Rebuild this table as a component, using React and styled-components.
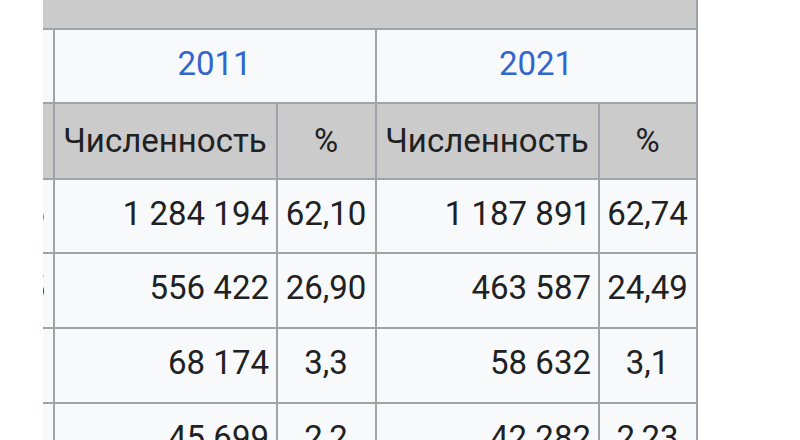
import React from 'react'
import styled, { createGlobalStyle } from 'styled-components'

const GlobalStyle = createGlobalStyle`
  html, body {
    margin: 0;
    padding: 0;
    background: #ffffff;
    overflow: hidden;
  }
  body {
    font-family: Roboto, 'Liberation Sans', sans-serif;
    color: #202122;
  }
`

const rows = [
  { edge: '6', a: '1 284 194', ap: '62,10', b: '1 187 891', bp: '62,74' },
  { edge: '5', a: '556 422', ap: '26,90', b: '463 587', bp: '24,49' },
  { edge: '', a: '68 174', ap: '3,3', b: '58 632', bp: '3,1' },
  { edge: '', a: '45 699', ap: '2,2', b: '42 282', bp: '2,23' },
]

const App = () => {
  return (
    <Page>
      <GlobalStyle />
      <Table>
        <TopBand />

        <EdgeCell />
        <YearCell><a>2011</a></YearCell>
        <YearCell><a>2021</a></YearCell>

        <EdgeCell $head />
        <Cell $head $center>Численность</Cell>
        <Cell $head $center>%</Cell>
        <Cell $head $center>Численность</Cell>
        <Cell $head $center>%</Cell>

        {rows.map((r, i) => (
          <React.Fragment key={i}>
            <EdgeCell>{r.edge}</EdgeCell>
            <Cell>{r.a}</Cell>
            <Cell $center>{r.ap}</Cell>
            <Cell>{r.b}</Cell>
            <Cell $center>{r.bp}</Cell>
          </React.Fragment>
        ))}
      </Table>
    </Page>
  )
}

const Page = styled.div`
  height: 440px;
  padding-left: 43px;
  overflow: hidden;
`

const Table = styled.div`
  display: grid;
  width: 655px;
  grid-template-columns: 12px 223px 99px 223px 98px;
  grid-template-rows: 30px 74px 76px 74px 75px 75px 75px;
  font-size: 33px;
  line-height: 1;
`

const TopBand = styled.div`
  grid-column: 1 / -1;
  background: #cbcbcb;
  border-bottom: 2px solid #a0a3a7;
  border-right: 2px solid #a0a3a7;
`

const Cell = styled.div`
  box-sizing: border-box;
  display: flex;
  align-items: center;
  justify-content: ${p => (p.$center ? 'center' : 'flex-end')};
  min-width: 0;
  padding: 0 7px ${p => (p.$head ? '2px' : '6px')} 6px;
  background: ${p => (p.$head ? '#cbcbcb' : '#f8f9fa')};
  border-right: 2px solid #a0a3a7;
  border-bottom: 2px solid #a0a3a7;
  white-space: nowrap;
  overflow: hidden;
`

const EdgeCell = styled(Cell)`
  justify-content: flex-start;
  direction: rtl;
  padding: 0 8px 6px 0;
`

const YearCell = styled(Cell)`
  grid-column: span 2;
  justify-content: center;
  padding-bottom: 6px;

  a {
    color: #3366cc;
    text-decoration: none;
  }
`

export default App
